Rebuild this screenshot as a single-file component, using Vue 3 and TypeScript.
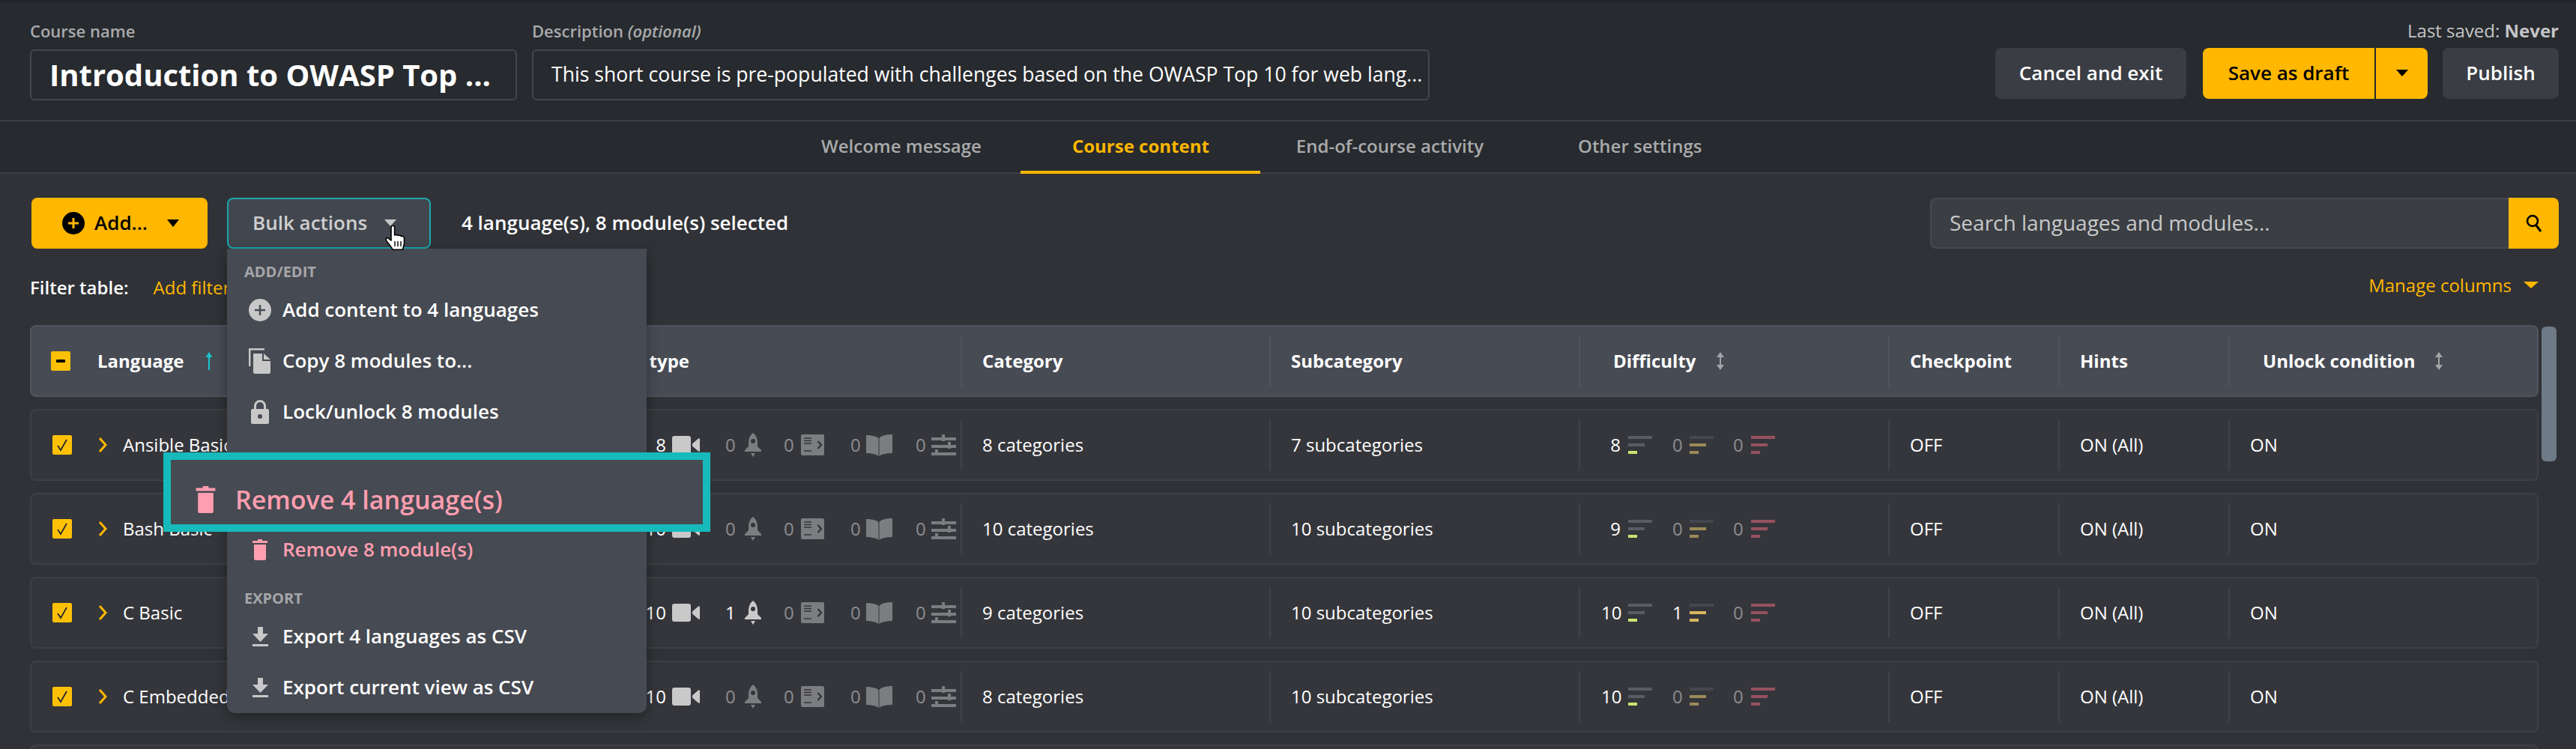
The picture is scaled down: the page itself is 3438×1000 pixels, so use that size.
<script setup lang="ts">
interface Row {
  name: string
  counts: number[]
  category: string
  subcategory: string
  difficulty: number[]
}

const rows: Row[] = [
  { name: 'Ansible Basic', counts: [8, 0, 0, 0, 0], category: '8 categories', subcategory: '7 subcategories', difficulty: [8, 0, 0] },
  { name: 'Bash Basic', counts: [10, 0, 0, 0, 0], category: '10 categories', subcategory: '10 subcategories', difficulty: [9, 0, 0] },
  { name: 'C Basic', counts: [10, 1, 0, 0, 0], category: '9 categories', subcategory: '10 subcategories', difficulty: [10, 1, 0] },
  { name: 'C Embedded', counts: [10, 0, 0, 0, 0], category: '8 categories', subcategory: '10 subcategories', difficulty: [10, 0, 0] },
]
const tabs = ['Welcome message', 'Course content', 'End-of-course activity', 'Other settings']
const levels = ['easy', 'medium', 'hard']
</script>

<template>
  <div class="page">
    <header class="top">
      <div class="field name-field">
        <label class="label">Course name</label>
        <div class="input title-input">Introduction to OWASP Top ...</div>
      </div>
      <div class="field desc-field">
        <label class="label">Description <em>(optional)</em></label>
        <div class="input desc-input">This short course is pre-populated with challenges based on the OWASP Top 10 for web lang...</div>
      </div>
      <div class="top-actions">
        <div class="saved">Last saved: <b>Never</b></div>
        <div class="action-row">
          <button class="btn dark cancel">Cancel and exit</button>
          <div class="split">
            <button class="btn yellow save">Save as draft</button>
            <button class="btn yellow caret-btn"><i class="tri tri-black"></i></button>
          </div>
          <button class="btn dark publish">Publish</button>
        </div>
      </div>
    </header>

    <nav class="tabs">
      <a v-for="(t, i) in tabs" :key="t" class="tab" :class="[`tab-${i}`, { active: i === 1 }]">{{ t }}</a>
    </nav>

    <main class="content">
      <div class="toolbar">
        <button class="btn yellow add">
          <svg class="add-icon" viewBox="0 0 30 30"><circle cx="15" cy="15" r="15" fill="#000" /><path d="M15 8v14M8 15h14" stroke="#ffb700" stroke-width="3" /></svg>
          <span>Add...</span>
          <i class="tri tri-black tri-big"></i>
        </button>
        <button class="bulk">
          <span>Bulk actions</span>
          <i class="tri tri-grey"></i>
        </button>
        <span class="selected">4 language(s), 8 module(s) selected</span>
        <div class="search">
          <div class="search-input">Search languages and modules...</div>
          <button class="search-btn">
            <svg viewBox="0 0 22 24" width="22" height="24"><circle cx="9" cy="9" r="7" fill="none" stroke="#000" stroke-width="2.6" /><path d="M14 15l6 8" stroke="#000" stroke-width="3" /></svg>
          </button>
        </div>
      </div>

      <div class="filter-row">
        <span class="filter-label">Filter table:</span>
        <a class="add-filter">Add filter</a>
        <a class="manage">Manage columns <i class="tri tri-yellow"></i></a>
      </div>

      <div class="table">
        <div class="tr thead">
          <div class="th first">
            <span class="check minus"><i></i></span>
            <span class="th-lang">Language</span>
            <svg class="up" viewBox="0 0 10 24" width="10" height="24"><path d="M5 0L9.5 7H6V24H4V7H.5z" fill="#1cc5cf" /></svg>
          </div>
          <div class="th type-head">Content type</div>
          <div class="th cell-sep pad-a">Category</div>
          <div class="th cell-sep pad-a">Subcategory</div>
          <div class="th cell-sep pad-d">Difficulty
            <svg class="sort" viewBox="0 0 12 24" width="12" height="24"><path d="M6 0l5 7H7v10h4l-5 7-5-7h4V7H1z" fill="#a3a5a8" /></svg>
          </div>
          <div class="th cell-sep pad-a">Checkpoint</div>
          <div class="th cell-sep pad-a">Hints</div>
          <div class="th cell-sep pad-u">Unlock condition
            <svg class="sort" viewBox="0 0 12 24" width="12" height="24"><path d="M6 0l5 7H7v10h4l-5 7-5-7h4V7H1z" fill="#a3a5a8" /></svg>
          </div>
        </div>

        <div v-for="r in rows" :key="r.name" class="tr">
          <div class="td first">
            <span class="check">
              <svg viewBox="0 0 26 26" width="26" height="26"><path d="M7 14l4 6 8-14" fill="none" stroke="#26292d" stroke-width="1.8" /></svg>
            </span>
            <svg class="chev" viewBox="0 0 12 20" width="12" height="20"><path d="M2 1l8 9-8 9" fill="none" stroke="#ffb700" stroke-width="3" /></svg>
            <span class="lang-name">{{ r.name }}</span>
          </div>
          <div class="td types">
            <div class="stat s1" :class="{ zero: !r.counts[0] }">
              <span class="count">{{ r.counts[0] }}</span>
              <svg viewBox="0 0 37 24" width="37" height="24"><rect width="25" height="24" rx="3" fill="currentColor" /><path d="M27 10.5L35 3.5q2-1 2 1V19.500q0 2-2 1L27 13.500z" fill="currentColor" /></svg>
            </div>
            <div class="stat s2" :class="{ zero: !r.counts[1] }">
              <span class="count">{{ r.counts[1] }}</span>
              <svg viewBox="0 0 22 32" width="22" height="32"><path d="M11 0C7 3 5 8 5 13v5l-5 5v2h22v-2l-5-5v-5c0-5-2-10-6-13z" fill="currentColor" /><circle cx="11" cy="11" r="3" fill="#35363b" /><path d="M8 27h6l-3 5z" fill="currentColor" /></svg>
            </div>
            <div class="stat s3 zero">
              <span class="count">{{ r.counts[2] }}</span>
              <svg viewBox="0 0 31 28" width="31" height="28"><rect width="31" height="28" rx="2" fill="currentColor" /><path d="M4 5h10M4 8.500h10M4 12h10M4 22h10" stroke="#35363b" stroke-width="1.600" /><path d="M22.500 9l4.500 5-4.500 5" fill="none" stroke="#35363b" stroke-width="2.400" /></svg>
            </div>
            <div class="stat s4 zero">
              <span class="count">{{ r.counts[3] }}</span>
              <svg viewBox="0 0 37 29" width="37" height="29"><path d="M1 1c6 0 13 1 16.500 4v24C14 26 7 25 1 25zM36 0c-6 0-15 1-17.500 5v24c3-3 11-4 17.500-4z" fill="currentColor" /></svg>
            </div>
            <div class="stat s5 zero">
              <span class="count">{{ r.counts[4] }}</span>
              <svg viewBox="0 0 33 28" width="33" height="28"><path d="M0 4h33v4H0zM0 14h33v4H0zM0 24h33v4H0z" fill="currentColor" /><path d="M14 0h4v9h-4zM22 10h4v9h-4zM5 20h4v8H5z" fill="currentColor" /></svg>
            </div>
          </div>
          <div class="td cell-sep pad-a">{{ r.category }}</div>
          <div class="td cell-sep pad-a">{{ r.subcategory }}</div>
          <div class="td cell-sep pad-dv">
            <div v-for="(lv, i) in levels" :key="lv" class="diff" :class="[`d${i}`, lv, { zero: !r.difficulty[i] }]">
              <span class="count">{{ r.difficulty[i] }}</span>
              <span class="bars"><i></i><i></i><i></i></span>
            </div>
          </div>
          <div class="td cell-sep pad-a">OFF</div>
          <div class="td cell-sep pad-a">ON (All)</div>
          <div class="td cell-sep pad-a">ON</div>
        </div>
        <div class="tr"></div>
      </div>
    </main>

    <div class="scrollbar"></div>

    <div class="menu">
      <div class="menu-head">ADD/EDIT</div>
      <div class="menu-item">
        <span class="mi"><svg viewBox="0 0 30 30" width="30" height="30"><circle cx="15" cy="15" r="15" fill="#c8c8c8" /><path d="M15 8v14M8 15h14" stroke="#474b54" stroke-width="2.400" /></svg></span>
        Add content to 4 languages
      </div>
      <div class="menu-item">
        <span class="mi"><svg viewBox="0 0 30 34" width="30" height="34"><path d="M1.200 24V1.200H21" fill="none" stroke="#c8c8c8" stroke-width="2.400" /><path d="M6 8q0-1 1-1h11v10h11v15q0 2-2 2H8q-2 0-2-2zM20 7l9 8h-9z" fill="#c8c8c8" /></svg></span>
        Copy 8 modules to...
      </div>
      <div class="menu-item">
        <span class="mi"><svg viewBox="0 0 24 32" width="24" height="32"><path d="M5.500 14V8a6.500 6.500 0 0 1 13 0v6" fill="none" stroke="#c8c8c8" stroke-width="3" /><rect y="12" width="24" height="20" rx="2" fill="#c8c8c8" /><circle cx="12" cy="22" r="3" fill="#474b54" /></svg></span>
        Lock/unlock 8 modules
      </div>
      <div class="menu-gap"></div>
      <div class="menu-item danger">
        <span class="mi"><svg viewBox="0 0 20 28" width="20" height="28"><path d="M7 0h6v2h7v3H0V2h7zM2 7h16v19q0 2-2 2H4q-2 0-2-2z" fill="#ff9eb0" /></svg></span>
        Remove 8 module(s)
      </div>
      <div class="menu-head">EXPORT</div>
      <div class="menu-item">
        <span class="mi"><svg viewBox="0 0 21 26" width="21" height="26"><path d="M7 0h7v9h7L10.500 20 0 9h7zM0 23h21v3H0z" fill="#c8c8c8" /></svg></span>
        Export 4 languages as CSV
      </div>
      <div class="menu-item">
        <span class="mi"><svg viewBox="0 0 21 26" width="21" height="26"><path d="M7 0h7v9h7L10.500 20 0 9h7zM0 23h21v3H0z" fill="#c8c8c8" /></svg></span>
        Export current view as CSV
      </div>
    </div>

    <div class="highlight">
      <svg viewBox="0 0 20 28" width="27" height="36"><path d="M7 0h6v2h7v3H0V2h7zM2 7h16v19q0 2-2 2H4q-2 0-2-2z" fill="#ff9eb0" /></svg>
      <span>Remove 4 language(s)</span>
    </div>

    <svg class="cursor" viewBox="0 0 30 34" width="30" height="34">
      <path d="M9 2.500a2.300 2.300 0 0 1 4.600 0V13l2-.5a2 2 0 0 1 2.400 1l2-.3a2 2 0 0 1 2.400 1.300l1.500-.2c1.800 0 2.600 1.200 2.600 3v6c0 3-1.500 5-2 9H11c-1-3-4-6-7-10-1.500-2-2.500-3.500-1.500-5 1-1.300 3-.5 4 .8L9 20z" fill="#fff" stroke="#000" stroke-width="1.600" stroke-linejoin="round" />
      <path d="M14 21v7M18 21v7M22 21v7" stroke="#000" stroke-width="1.400" />
    </svg>
  </div>
</template>

<style scoped>
.page {
  position: relative;
  width: 3438px;
  height: 1000px;
  overflow: hidden;
  background: #303237;
  font-family: "Open Sans", "DejaVu Sans", sans-serif;
  color: #fff;
  font-size: 26px;
}
button { font-family: inherit; border: 0; padding: 0; margin: 0; cursor: pointer; }

.tri { display: inline-block; width: 0; height: 0; border-style: solid; border-color: transparent; border-width: 9px 8px 0 8px; }
.tri-black { border-top-color: #000; }
.tri-big { border-width: 10px 8px 0 8px; }
.tri-grey { border-top-color: #c8c8c8; }
.tri-yellow { border-top-color: #ffb700; border-width: 9px 10px 0 10px; }

.top {
  box-sizing: content-box;
  height: 157px;
  border-top: 3px solid #1f2125;
  border-bottom: 2px solid #3c3e43;
  background: #272a2e;
  padding-left: 40px;
  padding-right: 23px;
  display: flex;
  gap: 20px;
}
.field { padding-top: 24px; }
.name-field { width: 650px; }
.desc-field { width: 1198px; }
.label { display: block; font-size: 22px; line-height: 28px; height: 39px; color: #a8aaad; font-weight: 600; }
.label em { font-style: italic; }
.input {
  box-sizing: border-box;
  height: 68px;
  border: 2px solid #45474d;
  border-radius: 6px;
  display: flex;
  align-items: center;
  padding: 0 0 2px 24px;
  white-space: nowrap;
  overflow: hidden;
}
.title-input { font-size: 40px; font-weight: 700; }
.desc-input { font-size: 26.6px; font-weight: 500; }
.top-actions { margin-left: auto; display: flex; flex-direction: column; align-items: flex-end; padding-top: 24px; }
.saved { font-size: 24px; line-height: 28px; height: 37px; color: #c4c5c7; font-weight: 500; }
.saved b { font-weight: 700; }
.action-row { display: flex; gap: 20px; }
.btn { height: 68px; font-size: 26px; font-weight: 600; border-radius: 8px; display: inline-flex; align-items: center; justify-content: center; padding-bottom: 2px; }
.dark { background: #3a3d44; color: #fff; }
.yellow { background: #ffb700; color: #000; }
.cancel { width: 255px; margin-right: 2px; }
.publish { width: 155px; }
.split { display: flex; }
.save { width: 231px; border-radius: 8px 0 0 8px; border-right: 2px solid #26292d; }
.caret-btn { width: 69px; border-radius: 0 8px 8px 0; }

.tabs {
  height: 68px;
  border-bottom: 2px solid #3c3e43;
  background: #272a2e;
  display: flex;
  font-size: 24px;
  font-weight: 600;
  color: #a9aaac;
  padding-left: 1096px;
  box-sizing: content-box;
}
.tab { display: flex; align-items: center; height: 64px; white-space: nowrap; border-bottom: 4px solid transparent; padding-bottom: 2px; box-sizing: content-box; }
.tab.active { color: #ffb700; font-weight: 700; border-bottom-color: #ffb700; padding: 0 68px 2px 69px; }
.tab-0 { margin-right: 52px; }
.tab-1 { margin-right: 48px; }
.tab-2 { margin-right: 126px; }

.content { padding: 32px 0 0 40px; }
.toolbar { display: flex; align-items: center; height: 68px; padding-right: 23px; margin-left: 2px; }
.add { width: 235px; justify-content: flex-start; padding-left: 41px; box-sizing: border-box; font-weight: 600; }
.add-icon { width: 30px; height: 30px; margin-right: 13px; margin-top: 2px; }
.add .tri { margin-left: 26px; margin-top: 2px; }
.bulk {
  box-sizing: border-box;
  margin-left: 26px;
  width: 272px;
  height: 68px;
  background: #42464e;
  border: 2px solid #1aa8ae;
  border-radius: 8px;
  color: #cfcfd0;
  font-size: 26px;
  font-weight: 600;
  display: flex;
  align-items: center;
  padding: 0 0 2px 32px;
  gap: 23px;
}
.selected { margin-left: 41px; font-weight: 600; padding-bottom: 2px; }
.search { margin-left: auto; display: flex; width: 839px; height: 68px; }
.search-input {
  flex: 1;
  box-sizing: border-box;
  background: #3b3e43;
  border: 2px solid #46494f;
  border-right: 0;
  border-radius: 8px 0 0 8px;
  color: #c8c9ca;
  font-size: 28px;
  display: flex;
  align-items: center;
  padding: 0 0 2px 24px;
}
.search-btn { width: 67px; background: #ffb700; border-radius: 0 8px 8px 0; display: flex; align-items: center; justify-content: center; }

.filter-row { display: flex; align-items: center; height: 102px; padding-right: 50px; font-size: 24px; position: relative; }
.filter-label { font-weight: 600; }
.add-filter { margin-left: 33px; color: #ffb700; font-weight: 500; }
.manage { margin-left: auto; color: #ffb700; font-weight: 500; font-size: 24px; margin-top: -6px; display: flex; align-items: center; gap: 16px; white-space: nowrap; }

.table { width: 3348px; display: flex; flex-direction: column; gap: 16px; }
.tr {
  box-sizing: border-box;
  height: 96px;
  flex: none;
  background: #35363b;
  border: 2px solid #3e4045;
  border-radius: 8px;
  display: grid;
  grid-template-columns: 698px 542px 412px 413px 413px 227px 227px 1fr;
  align-items: center;
  font-weight: 500;
  font-size: 24px;
}
.thead { background: #474b54; border-color: #4f545d; font-weight: 700; font-size: 24px; }
.th, .td { height: 68px; display: flex; align-items: center; box-sizing: border-box; white-space: nowrap; padding-bottom: 2px; }
.cell-sep { border-left: 2px solid #3f4248; }
.thead .cell-sep { border-left-color: #50545d; }
.pad-a { padding-left: 27px; }
.pad-d { padding-left: 44px; gap: 26px; }
.pad-u { padding-left: 44px; gap: 26px; }
.pad-dv { padding-left: 28px; }
.first { padding-left: 26px; }
.check { width: 26px; height: 26px; background: #ffc107; border-radius: 2px; display: flex; align-items: center; justify-content: center; flex: none; margin: 2px 0 0 2px; }
.check.minus { margin-left: 0; }
.check.minus i { width: 12px; height: 4px; background: #000; border-radius: 1px; }
.th-lang { margin-left: 36px; }
.up { margin: 2px 0 0 29px; }
.sort { margin-top: 2px; }
.chev { margin: 2px 0 0 35px; flex: none; }
.lang-name { margin-left: 21px; }
.type-head { justify-content: flex-end; padding-right: 362px; }

.types { padding-left: 119px; }
.stat { display: flex; align-items: center; color: #c9c9c9; }
.stat svg { margin-top: 2px; }
.stat .count { text-align: right; color: #fff; }
.stat.zero { color: #7c7d80; }
.stat.zero .count { color: #8b8d90; }
.s1 .count { width: 30px; margin-right: 8px; }
.s2 { margin-left: 34px; }
.s2 .count { width: 13px; margin-right: 13px; }
.s3 { margin-left: 30px; }
.s3 .count { width: 13px; margin-right: 10px; }
.s4 { margin-left: 35px; }
.s4 .count { width: 13px; margin-right: 7px; }
.s5 { margin-left: 30px; }
.s5 .count { width: 13px; margin-right: 8px; }

.diff { display: flex; align-items: center; }
.diff .count { text-align: right; color: #fff; }
.diff.zero .count { color: #8b8d90; }
.d0 .count { width: 26px; margin-right: 10px; }
.d1 { margin-left: 27px; }
.d1 .count { width: 13px; margin-right: 10px; }
.d2 { margin-left: 26px; }
.d2 .count { width: 13px; margin-right: 11px; }
.bars { display: flex; flex-direction: column; gap: 6px; width: 32px; margin-top: 2px; }
.bars i { display: block; height: 4px; }
.bars i:nth-child(1) { width: 32px; }
.bars i:nth-child(2) { width: 22px; }
.bars i:nth-child(3) { width: 12px; }
.easy .bars i { background: #575c65; }
.easy .bars i:nth-child(3) { background: #c9e472; }
.medium .bars i { background: #9a8a58; }
.medium .bars i:nth-child(1) { background: #44474d; }
.hard .bars i { background: #96525f; }
.medium:not(.zero) .bars i { background: #d9b760; }
.medium:not(.zero) .bars i:nth-child(1) { background: #44474d; }

.scrollbar { position: absolute; left: 3392px; top: 436px; width: 20px; height: 180px; border-radius: 6px; background: #6f7a87; }

.menu {
  position: absolute;
  left: 303px;
  top: 332px;
  width: 560px;
  height: 620px;
  background: #464a52;
  border-radius: 0 0 10px 10px;
  box-shadow: 0 6px 18px rgba(0, 0, 0, .35);
  z-index: 2;
}
.menu-head { height: 48px; box-sizing: border-box; padding: 17px 0 0 23px; font-size: 20px; line-height: 28px; font-weight: 700; color: #a5a6a9; }
.menu-item { height: 68px; display: flex; align-items: center; font-size: 26px; font-weight: 600; white-space: nowrap; padding: 0 0 2px 29px; box-sizing: border-box; }
.mi { width: 30px; margin: 2px 15px 0 0; display: flex; justify-content: center; }
.menu-gap { height: 116px; }
.danger { color: #ff9eb0; }

.highlight {
  position: absolute;
  left: 218px;
  top: 604px;
  width: 730px;
  height: 106px;
  box-sizing: border-box;
  border: 10px solid #16baba;
  background: #464a52;
  z-index: 3;
  display: flex;
  align-items: center;
  padding: 20px 0 0 33px;
  gap: 26px;
  color: #ff9eb0;
  font-size: 34px;
  font-weight: 600;
  white-space: nowrap;
}
.cursor { position: absolute; left: 513px; top: 301px; z-index: 4; }
</style>
